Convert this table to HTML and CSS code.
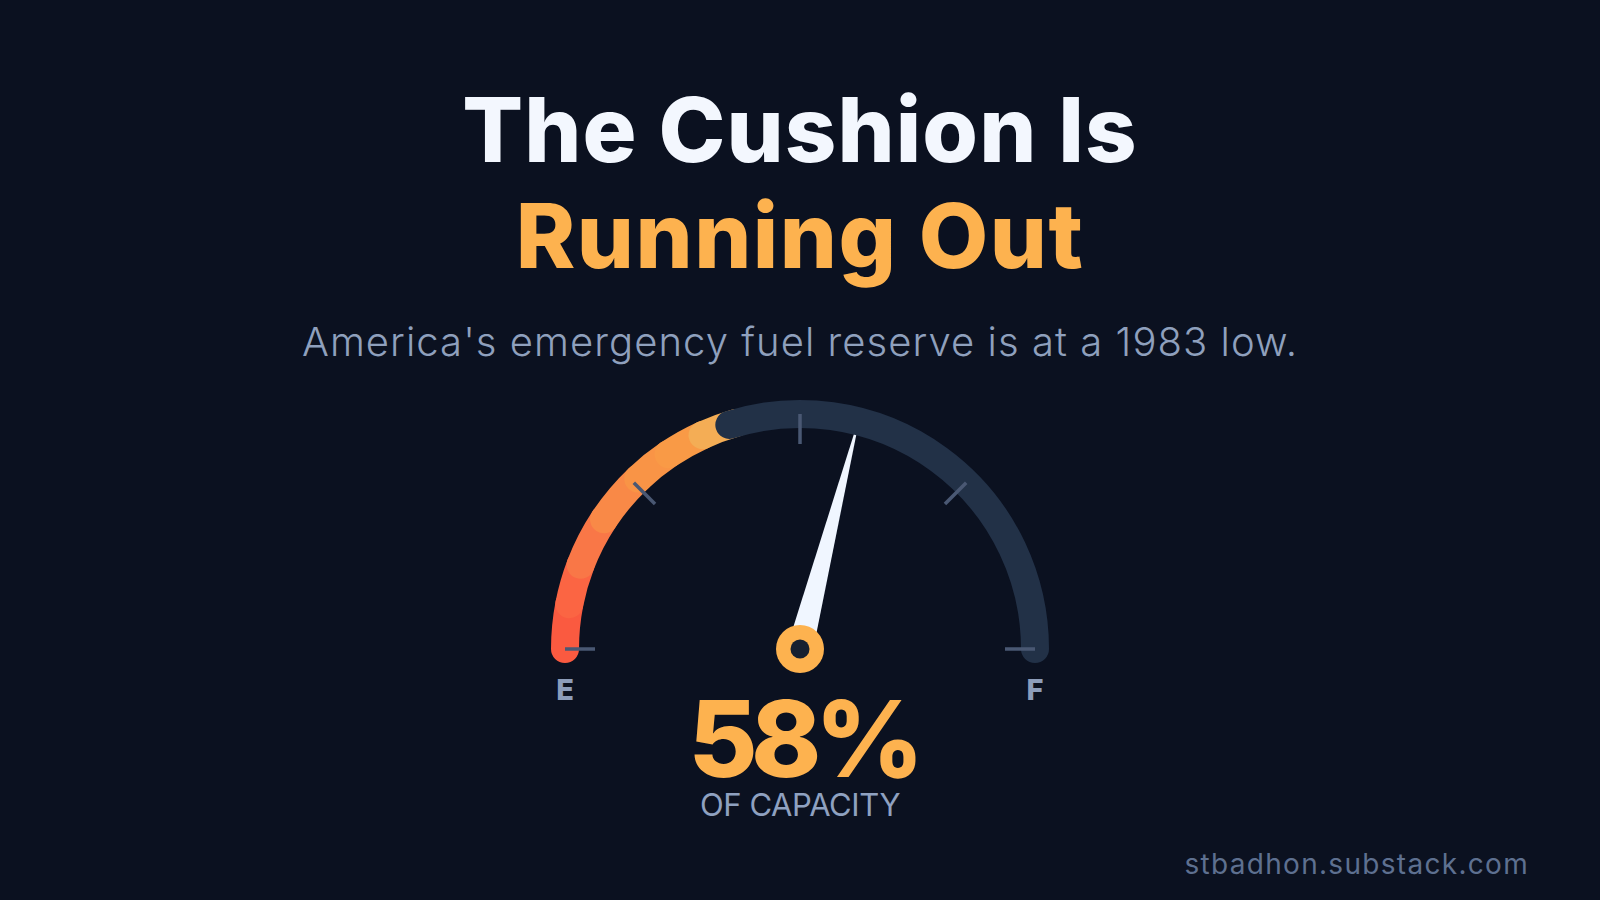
FILE: index.html
```html
<!DOCTYPE html>
<html lang="en">
<head>
<meta charset="utf-8">
<title>The Cushion Is Running Out</title>
<link rel="stylesheet" href="styles.css">
</head>
<body>
<main class="page">
  <h1 class="title"><span class="title-line">The Cushion Is</span><span class="title-line accent">Running Out</span></h1>
  <p class="subtitle">America's emergency fuel reserve is at a 1983 low.</p>
  <section class="gauge">
    <svg class="dial" width="500" height="276" viewBox="0 0 500 276" aria-hidden="true">
      <g fill="none" stroke-width="28" stroke-linecap="round">
        <path d="M15 250 A235 235 0 0 1 19.32 205.16" stroke="#fa5a40"/>
        <path d="M19.32 205.16 A235 235 0 0 1 30.61 165.78" stroke="#fb6543"/>
        <path d="M30.61 165.78 A235 235 0 0 1 54.04 120.29" stroke="#f97747"/>
        <path d="M54.04 120.29 A235 235 0 0 1 88.24 79.54" stroke="#f98947"/>
        <path d="M88.24 79.54 A235 235 0 0 1 118.59 55.18" stroke="#f99446"/>
        <path d="M118.59 55.18 A235 235 0 0 1 152.55 36.16" stroke="#f99a46"/>
        <path d="M152.55 36.16 A235 235 0 0 1 185.22 24.10" stroke="#f4ad55"/>
      </g>
      <polygon points="310.93,12.70 262.59,253.23 237.41,246.77" fill="#f0f6ff"/>
      <path d="M179.33 25.88 A235 235 0 0 1 485 250" fill="none" stroke="#223147" stroke-width="28" stroke-linecap="round"/>
      <g stroke="#4a5873" stroke-width="3.5">
        <line x1="15" y1="250" x2="45" y2="250"/>
        <line x1="83.83" y1="83.83" x2="105.04" y2="105.04"/>
        <line x1="250" y1="15" x2="250" y2="45"/>
        <line x1="416.17" y1="83.83" x2="394.96" y2="105.04"/>
        <line x1="485" y1="250" x2="455" y2="250"/>
      </g>
      <circle cx="250" cy="250" r="24" fill="#fdb24f"/>
      <circle cx="250" cy="250" r="9.5" fill="#172030"/>
    </svg>
    <div class="scale"><span>E</span><span>F</span></div>
    <div class="value">58%</div>
    <div class="caption">OF CAPACITY</div>
  </section>
  <footer class="credit">stbadhon.substack.com</footer>
</main>
</body>
</html>
```

FILE: styles.css
```css
html, body {
  margin: 0;
  background: #0b1120;
}

.page {
  width: 1600px;
  height: 900px;
  box-sizing: border-box;
  padding-top: 77px;
  display: flex;
  flex-direction: column;
  align-items: center;
  font-family: "Inter", "Liberation Sans", sans-serif;
}

.title {
  margin: 0;
  font-size: 90px;
  font-weight: 800;
  line-height: 106px;
  letter-spacing: 1.1px;
  text-align: center;
  color: #f3f7fe;
}

.title-line {
  display: block;
}

.accent {
  color: #fdb24f;
  letter-spacing: 1.5px;
}

.subtitle {
  margin: 29px 0 0;
  font-size: 40px;
  font-weight: 300;
  line-height: 48px;
  letter-spacing: 1.05px;
  color: #8fa0bd;
}

.gauge {
  margin-top: 33px;
  display: flex;
  flex-direction: column;
  align-items: center;
}

.dial {
  display: block;
}

.scale {
  width: 500px;
  height: 22px;
  display: flex;
  justify-content: space-between;
}

.scale span {
  width: 30px;
  text-align: center;
  font-size: 29px;
  font-weight: 800;
  line-height: 30px;
  color: #8d9dba;
}

.value {
  font-size: 106px;
  font-weight: 800;
  line-height: 84px;
  letter-spacing: -6.5px;
  padding-left: 6px;
  color: #fdb24f;
}

.caption {
  margin-top: 8px;
  font-size: 31px;
  line-height: 32px;
  letter-spacing: -0.4px;
  color: #8fa1c0;
}

.credit {
  margin-top: auto;
  align-self: flex-end;
  padding: 0 71px 19px 0;
  font-size: 28px;
  line-height: 34px;
  letter-spacing: 1.3px;
  color: #5e7090;
}
```
